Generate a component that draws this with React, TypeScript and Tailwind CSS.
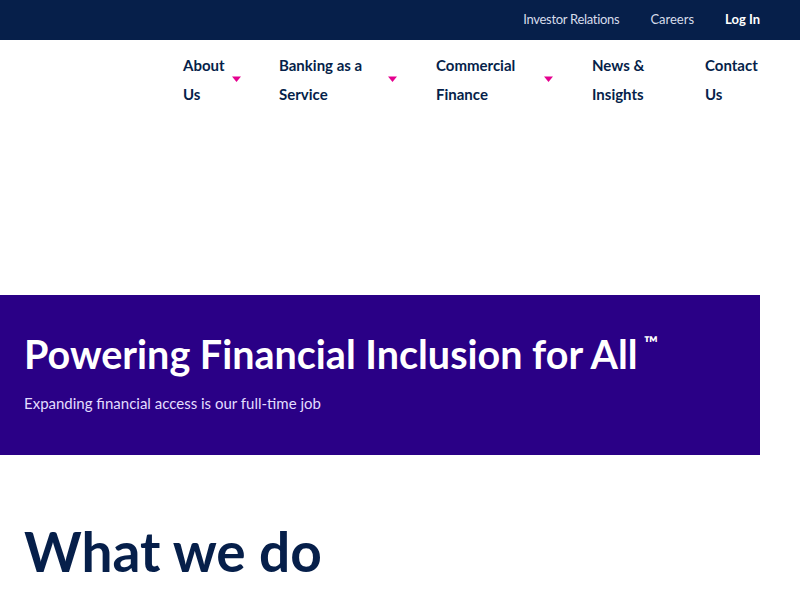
import React from 'react';

const navItems = [
  { label: ['About', 'Us'], width: 'w-[96px]', caret: 'left-[49px]' },
  { label: ['Banking as a', 'Service'], width: 'w-[157px]', caret: 'left-[109px]' },
  { label: ['Commercial', 'Finance'], width: 'w-[156px]', caret: 'left-[108px]' },
  { label: ['News &', 'Insights'], width: 'w-[113px]', caret: '' },
  { label: ['Contact', 'Us'], width: 'w-[95px]', caret: '' },
];

const Caret = ({ pos }: { pos: string }) => (
  <svg width="9" height="6" viewBox="0 0 9 6" className={`absolute top-[25px] ${pos}`}>
    <path d="M0 0.5 H9 L4.5 6 Z" fill="#e5008f" />
  </svg>
);

export default function App() {
  return (
    <div className="w-[800px] h-[600px] overflow-hidden bg-white font-['Lato',sans-serif]">
      {/* Utility bar */}
      <div className="h-[40px] bg-[#061f4a] flex items-center justify-end pr-[40px] text-[13px] text-[#d6dcea]">
        <a className="mr-[31px] tracking-[-0.3px]">Investor Relations</a>
        <a className="mr-[31px]">Careers</a>
        <a className="font-bold text-white">Log In</a>
      </div>

      {/* Main nav */}
      <nav className="flex pl-[183px] pt-[11px] text-[15px] font-bold leading-[29px] text-[#061f4a]">
        {navItems.map((item) => (
          <div key={item.label[0]} className={`relative ${item.width}`}>
            <div>{item.label[0]}</div>
            <div>{item.label[1]}</div>
            {item.caret && <Caret pos={item.caret} />}
          </div>
        ))}
      </nav>

      <div className="h-[186px]" />

      {/* Hero */}
      <section className="w-[760px] h-[160px] bg-[#2a0086] pl-[24px] pt-[35px]">
        <h1 className="flex items-start text-[39.5px] font-bold leading-[48px] text-white">
          <span>Powering Financial Inclusion for All</span>
          <span className="ml-[6px] mt-[3px] text-[19px] leading-[19px] font-bold">™</span>
        </h1>
        <p className="mt-[14px] text-[15px] text-[#e3ddff]">Expanding financial access is our full-time job</p>
      </section>

      <h2 className="pl-[24px] pt-[63px] text-[55px] font-bold leading-[66px] text-[#061f4a]">What we do</h2>
    </div>
  );
}
